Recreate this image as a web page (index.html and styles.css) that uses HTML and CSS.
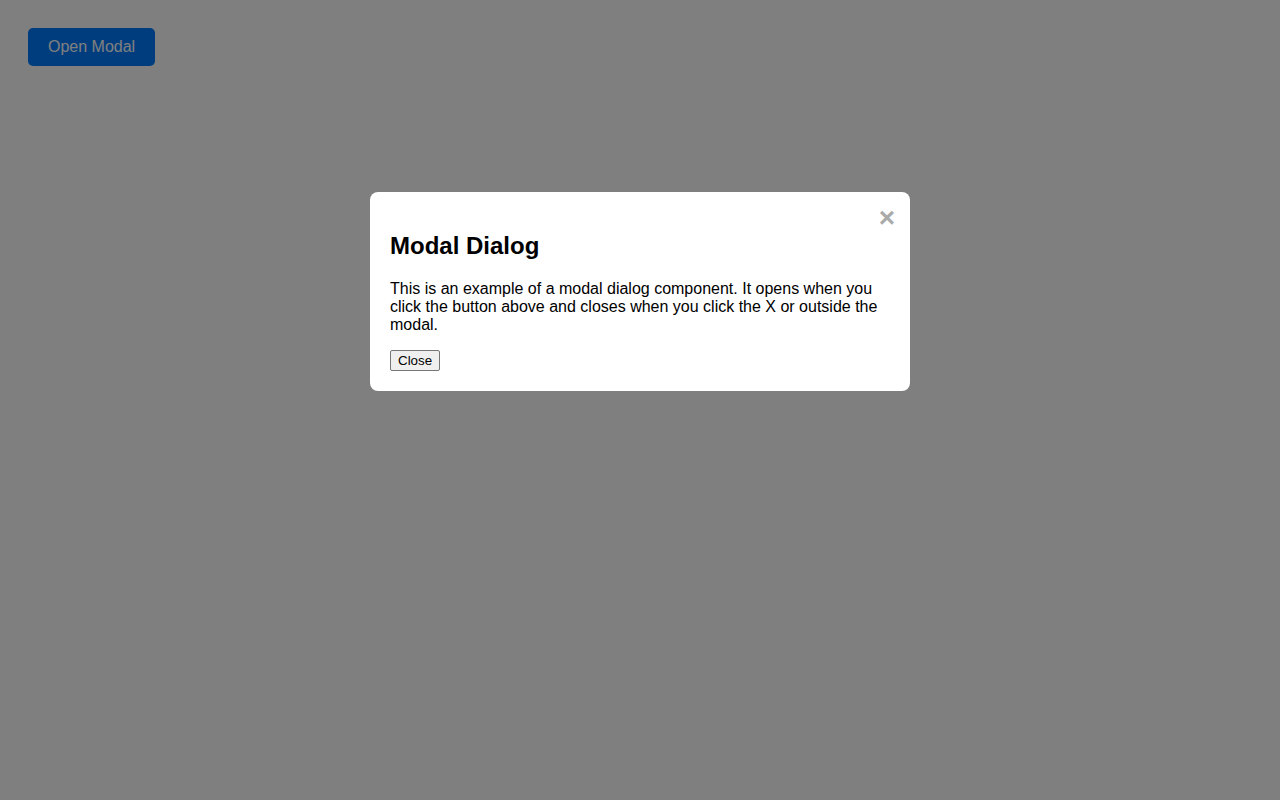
FILE: index.html
```html
<!DOCTYPE html>
<html lang="en">
<head>
  <meta charset="UTF-8" />
  <meta name="viewport" content="width=device-width, initial-scale=1.0" />
  <title>Modal Dialog</title>
  <link rel="stylesheet" href="styles.css">
</head>
<body>
  <button class="open-btn" onclick="openModal()">Open Modal</button>

  <div class="modal open" id="modal" onclick="outsideClick(event)">
    <div class="modal-content">
      <span class="close" onclick="closeModal()">&times;</span>
      <h2>Modal Dialog</h2>
      <p>This is an example of a modal dialog component. It opens when you click the button above and closes when you click the X or outside the modal.</p>
      <button class="close-btn" onclick="closeModal()">Close</button>
    </div>
  </div>

  <script>
    const modal = document.getElementById("modal");

    function openModal() {
      modal.classList.add("open");
    }

    function closeModal() {
      modal.classList.remove("open");
    }

    function outsideClick(e) {
      if (e.target === modal) closeModal();
    }
  </script>
</body>
</html>
```

FILE: styles.css
```css
body {
  font-family: "Liberation Sans", Arial, sans-serif;
  padding: 20px;
  background: #fff;
}

.open-btn {
  padding: 10px 20px;
  background-color: #007bff;
  color: white;
  border: none;
  border-radius: 5px;
  font-family: inherit;
  font-size: 16px;
  cursor: pointer;
}

.modal {
  display: none;
  position: fixed;
  z-index: 10;
  inset: 0;
  background-color: rgba(0, 0, 0, 0.5);
  overflow: auto;
}

.modal.open {
  display: block;
}

.modal-content {
  background-color: #fff;
  margin: 15% auto;
  padding: 20px;
  width: 500px;
  border-radius: 8px;
  color: #000;
}

.modal-content h2 {
  font-size: 24px;
  margin: 20px 0;
}

.modal-content p {
  font-size: 16px;
  margin: 16px 0;
}

.close {
  float: right;
  color: #aaa;
  font-size: 28px;
  font-weight: bold;
  line-height: 20px;
  margin-top: -4px;
  margin-right: -5px;
  cursor: pointer;
}

.close-btn {
  font-family: "Liberation Sans", Arial, sans-serif;
  font-size: 13.33px;
  padding: 2px 7px;
  background: #efefef;
  border: 1px solid #767676;
  border-radius: 2px;
  color: #000;
}
```
